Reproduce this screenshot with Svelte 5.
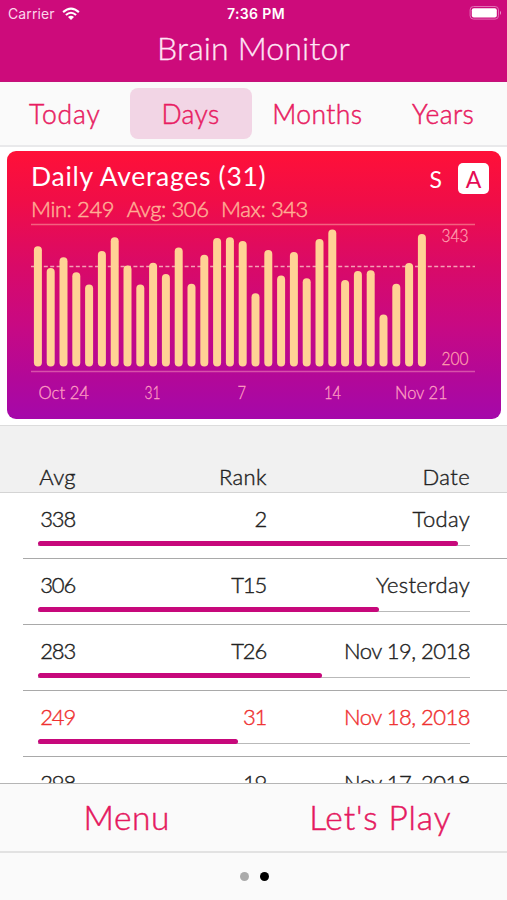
<script>
  const tabs = ['Today', 'Days', 'Months', 'Years'];
  const selected = 'Days';

  // Top edge of every bar in chart coordinates; all bars end on the same base.
  const tops = [
    246.3, 268, 257.3, 272.3, 284.6, 251, 237.3, 265.5, 284.5, 262.8, 274, 247.5, 283.7, 254.7, 238, 237.3,
    241, 293.3, 250, 275.5, 252, 278.3, 239, 229.5, 280, 271, 270.3, 314.5, 283.7, 263, 234
  ].map((y) => y - 223);
  const base = 143.5;
  const labels = [
    { x: 7.5, w: 50.5, text: 'Oct 24' },
    { x: 113.5, w: 16, text: '31' },
    { x: 206.5, w: 8.5, text: '7' },
    { x: 293, w: 17, text: '14' },
    { x: 364, w: 52.5, text: 'Nov 21' }
  ];

  const rows = [
    { avg: '338', rank: '2', date: 'Today', cls: 'today', fill: 420 },
    { avg: '306', rank: 'T15', date: 'Yesterday', cls: 'yesterday', fill: 341 },
    { avg: '283', rank: 'T26', date: 'Nov 19, 2018', fill: 284 },
    { avg: '249', rank: '31', date: 'Nov 18, 2018', fill: 200, low: true },
    { avg: '298', rank: '19', date: 'Nov 17, 2018', fill: 322 }
  ];
</script>

<div class="screen">
  <header>
    <div class="status">
      <div class="carrier">
        <span>Carrier</span>
        <svg width="18" height="14" viewBox="0 0 18 14">
          <g fill="none" stroke="#fff" stroke-width="2.1">
            <path d="M1.1 5.1 Q9 -1.9 16.9 5.1" />
            <path d="M3.9 8 Q9 3.5 14.1 8" />
          </g>
          <path d="M6 10 Q9 7.7 12 10 L9 13z" fill="#fff" />
        </svg>
      </div>
      <div class="time">7:36 PM</div>
      <svg class="battery" width="33" height="15" viewBox="0 0 33 15">
        <rect x="1.1" y="0.5" width="28.4" height="12.6" rx="3.4" fill="none" stroke="#e26db5" stroke-width="1" />
        <rect x="2.8" y="2.2" width="25" height="9.2" rx="2" fill="#fff" />
        <path d="M31 4.7q2 2.1 0 4.2z" fill="#ee94cb" />
      </svg>
    </div>
    <h1>Brain Monitor</h1>
  </header>

  <nav>
    {#each tabs as tab}
      <button class={tab.toLowerCase()} class:active={tab === selected}>{tab}</button>
    {/each}
  </nav>

  <section class="card">
    <div class="top">
      <h2>Daily Averages (31)</h2>
      <div class="modes"><span class="s">S</span><span class="a">A</span></div>
    </div>
    <div class="stats"><span>Min: 249</span><span>Avg: 306</span><span>Max: 343</span></div>
    <svg class="chart" width="445" height="190" viewBox="0 0 445 190">
      <path d="M0 1.5H444" stroke="#f2627f" stroke-width="1.6" />
      <path d="M0 43.5H444" stroke="#f6a0b4" stroke-width="1.3" stroke-dasharray="4 2.4" />
      <path d="M0 148.5H444" stroke="#d850aa" stroke-width="1.6" />
      {#each tops as top, i}
        <rect x={2.9 + i * 12.8} y={top} width="8" height={base - top} rx="4" fill="#ffd295" />
      {/each}
      <text class="value" x="410.5" y="19" textLength="27" lengthAdjust="spacingAndGlyphs">343</text>
      <text class="value" x="410.5" y="142" textLength="27" lengthAdjust="spacingAndGlyphs">200</text>
      {#each labels as l}
        <text class="tick" x={l.x} y="176" textLength={l.w} lengthAdjust="spacingAndGlyphs">{l.text}</text>
      {/each}
    </svg>
  </section>

  <div class="columns">
    <span class="c1">Avg</span><span class="c2">Rank</span><span class="c3">Date</span>
  </div>

  <main>
    {#each rows as r}
      <div class="row" class:low={r.low}>
        <div class="cells">
          <span class="c1">{r.avg}</span><span class="c2">{r.rank}</span><span class="c3 {r.cls ?? 'dated'}">{r.date}</span>
        </div>
        <div class="track"><div class="fill" style="width: {r.fill}px"></div></div>
      </div>
    {/each}
  </main>

  <div class="actions">
    <button class="menu">Menu</button>
    <button class="play">Let's Play</button>
  </div>
  <div class="pager"><i></i><i class="on"></i></div>
</div>

<style>
  :global(body) { margin: 0; background: #fff; }
  .screen {
    width: 507px; height: 900px; overflow: hidden; background: #fff;
    display: flex; flex-direction: column;
    font-family: Lato, "Open Sans", sans-serif; color: #222;
  }
  * { box-sizing: border-box; }
  button { border: 0; background: none; padding: 0; font: inherit; color: inherit; white-space: nowrap; }
  header { height: 82px; flex: none; background: #cd0b7b; border-bottom: 1px solid #c3127a; color: #fff; }
  .status {
    height: 27px; padding: 0 5px 0 8px; display: grid; grid-template-columns: 1fr auto 1fr; align-items: center;
    font-family: Inter, Roboto, sans-serif; font-size: 14px;
  }
  .carrier { display: flex; align-items: center; gap: 7px; color: #fbd5ec; letter-spacing: 0.1px; }
  .time { font-weight: 600; letter-spacing: 0.4px; padding-left: 2px; }
  .battery { justify-self: end; }
  h1 {
    margin: 0; height: 42px; line-height: 42px; text-align: center;
    font-weight: 300; font-size: 32px; letter-spacing: 0.15px; color: #ffe6f6; -webkit-text-stroke: 0.3px;
  }
  nav {
    height: 65px; flex: none; padding: 6px 2px 7px; display: grid; grid-template-columns: repeat(4, 1fr);
    background: #fafafa; border-bottom: 2px solid #e9e9eb; color: #e81c62;
    font-size: 26.5px; font-weight: 300; -webkit-text-stroke: 0.5px;
  }
  nav button { border-radius: 8px; margin: 0 2px; height: 51px; padding-top: 1px; letter-spacing: 0.4px; }
  nav .today { letter-spacing: 0.9px; }
  nav .months, nav .years { padding-left: 2px; }
  nav .active { background: #f2d5e5; }
  .card {
    height: 268px; flex: none; margin: 4px 6px 6px 7px; border-radius: 9px; padding: 9px 24px 0;
    background: linear-gradient(#ff1038 0%, #f00d48 19%, #d90a68 43%, #c80983 65%, #b20899 85%, #a508aa 100%);
  }
  .top { display: flex; justify-content: space-between; height: 36px; }
  h2 { margin: 0; font-weight: 400; font-size: 26.5px; line-height: 32px; letter-spacing: 0.7px; color: #fff; white-space: nowrap; }
  .modes { display: flex; gap: 16px; margin: 3px -12px 0 0; font-size: 23px; line-height: 32px; color: #fff; }
  .a { width: 31px; height: 31px; border-radius: 5px; background: #fff; color: #e50b55; text-align: center; }
  .stats {
    display: flex; gap: 12.5px; height: 27px; line-height: 25px; font-size: 22px; letter-spacing: -0.4px;
    color: #ffad94; font-weight: 300; -webkit-text-stroke: 0.5px;
  }
  .chart { display: block; font-weight: 300; }
  .value { font-size: 17.5px; fill: #ff9fae; stroke: #ff9fae; stroke-width: 0.3px; }
  .tick { font-size: 17.5px; fill: #ff9fc2; stroke: #ff9fc2; stroke-width: 0.3px; }
  .columns {
    height: 68px; flex: none; display: flex; align-items: flex-end; padding: 0 37px 2px 38px;
    background: #f1f1f1; border-top: 1px solid #dcdcdc; border-bottom: 1px solid #d4d4d4;
    font-size: 22px; line-height: 27px; font-weight: 300; -webkit-text-stroke: 0.4px; letter-spacing: 0.4px;
  }
  .c1 { width: 38px; text-align: right; }
  .c2 { width: 191px; text-align: right; }
  .c3 { flex: 1; text-align: right; white-space: nowrap; }
  main { height: 290px; flex: none; overflow: hidden; }
  .row { height: 66px; margin-left: 23px; padding: 12px 37px 0 15px; border-bottom: 1px solid #a9a9a9; }
  .cells { display: flex; font-size: 22px; line-height: 28px; font-weight: 300; -webkit-text-stroke: 0.4px; letter-spacing: -1.2px; }
  .cells .c1 { width: 37px; }
  .cells .dated { letter-spacing: -0.5px; }
  .cells .today, .cells .yesterday { letter-spacing: 0.3px; }
  .low .cells { color: #ef3030; }
  .track { height: 5px; margin-top: 8px; background: linear-gradient(#b9b9b9, #b9b9b9) 0 100% / 100% 1px no-repeat; }
  .fill { height: 5px; border-radius: 3px; background: #c7087b; }
  .actions {
    height: 70px; flex: none; display: grid; grid-template-columns: 1fr 1fr; background: #fafafa;
    border-top: 1px solid #b5b5b5; border-bottom: 2px solid #e2e2e2; color: #e5185f;
    font-size: 33.5px; font-weight: 300; -webkit-text-stroke: 0.5px;
  }
  .actions button { padding-bottom: 2px; letter-spacing: 0.6px; }
  .actions .play { letter-spacing: 0.9px; }
  .pager { height: 47px; flex: none; display: flex; justify-content: center; gap: 11px; padding: 19px 0 0 1px; background: #fafafa; }
  .pager i { width: 9px; height: 9px; border-radius: 50%; background: #aaa; }
  .pager .on { background: #000; }
</style>
